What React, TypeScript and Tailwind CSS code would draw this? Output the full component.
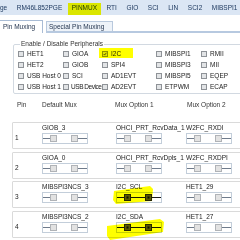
import React from "react";

const peripherals: string[][] = [
  ["HET1", "GIOA", "I2C", "MIBSPI1", "RMII"],
  ["HET2", "GIOB", "SPI4", "MIBSPI3", "MII"],
  ["USB Host 0", "SCI", "AD1EVT", "MIBSPI5", "EQEP"],
  ["USB Host 1", "USB Device", "AD2EVT", "ETPWM", "ECAP"],
];

const pins: { n: string; opts: string[]; sel: number }[] = [
  { n: "1", opts: ["GIOB_3", "OHCI_PRT_RcvData_1", "W2FC_RXDI"], sel: -1 },
  { n: "2", opts: ["GIOA_0", "OHCI_PRT_RcvDpls_1", "W2FC_RXDPI"], sel: -1 },
  { n: "3", opts: ["MIBSPI3NCS_3", "I2C_SCL", "HET1_29"], sel: 1 },
  { n: "4", opts: ["MIBSPI3NCS_2", "I2C_SDA", "HET1_27"], sel: 1 },
];

function Switch({ on }: { on: boolean }) {
  return (
    <svg width="46" height="11" viewBox="0 0 46 11" className="mt-[1px] block">
      <rect x="0.5" y="0.5" width="45" height="10" fill="none" stroke="#c3ceda" />
      {on ? (
        <line x1="1" y1="5.5" x2="45" y2="5.5" stroke="#1a1a1a" strokeWidth="1" />
      ) : (
        <>
          <line x1="1" y1="5.5" x2="8.5" y2="5.5" stroke="#6f7b8b" strokeWidth="1" />
          <line x1="35.5" y1="5.5" x2="45" y2="5.5" stroke="#6f7b8b" strokeWidth="1" />
        </>
      )}
      <rect x="8.5" y="2.5" width="6" height="6" fill={on ? "#5a5a5a" : "#e2e2e2"} stroke={on ? "#262626" : "#b0b3b7"} />
      <rect x="29.5" y="2.5" width="6" height="6" fill={on ? "#5a5a5a" : "#e2e2e2"} stroke={on ? "#262626" : "#b0b3b7"} />
      {on && (
        <>
          <rect x="10.5" y="4.5" width="2" height="2" fill="#111" />
          <rect x="31.5" y="4.5" width="2" height="2" fill="#111" />
        </>
      )}
    </svg>
  );
}

function Checkbox({ checked }: { checked?: boolean }) {
  return (
    <span className="shrink-0 w-[6px] h-[6px] border border-[#8e9297] bg-[#e2e4e6] flex items-center justify-center">
      {checked && (
        <svg width="6" height="6" viewBox="0 0 6 6" className="block">
          <path d="M1 3 L2.4 4.6 L5 1.2" fill="none" stroke="#222" strokeWidth="1" />
        </svg>
      )}
    </span>
  );
}

export default function App() {
  return (
    <div className="relative w-[240px] h-[240px] overflow-hidden bg-white font-['Liberation_Sans',Arial,sans-serif] text-[6.5px] leading-[8px] text-[#222]">
      {/* top tab bar */}
      <div className="h-[15px] bg-[#dbe6f4] flex items-center gap-[9.5px] whitespace-nowrap text-[#1f3a60] pt-[1px]">
        {["ge", "RM46L852PGE", "PINMUX", "RTI", "GIO", "SCI", "LIN", "SCI2", "MIBSPI1"].map((t) => (
          <span key={t}>{t}</span>
        ))}
      </div>

      {/* sub tabs */}
      <div className="h-[18px] flex items-end whitespace-nowrap text-[#1e2f4a]">
        <div className="w-[43px] h-[13px] pl-[3px] border-t border-r border-[#a9bcd5] bg-white flex items-center">
          Pin Muxing
        </div>
        <div className="ml-[3px] w-[67px] h-[12px] pl-[2px] border-t border-l border-r border-[#b9c9dd] border-b-2 border-b-[#b7c9e0] bg-[#eef3f9] flex items-center">
          Special Pin Muxing
        </div>
        <div className="flex-1 border-b-2 border-[#b7c9e0]" />
      </div>

      {/* peripherals group */}
      <fieldset className="mt-[7px] ml-[13px] w-[240px] border border-[#d2d9e1] rounded-[2px] pb-[1px]">
        <legend className="ml-[6px] px-[1px] leading-[8px] text-[#333]">Enable / Disable Peripherals</legend>
        <div className="grid grid-cols-[45px_39px_54px_45px_60px] auto-rows-[11px] pl-[4px]">
          {peripherals.flatMap((row, r) =>
            row.map((p, c) =>
              p === "USB Device" ? (
                <div key={`${r}-${c}`} className="flex items-center gap-[2px] whitespace-nowrap">
                  <Checkbox />
                  <span className="tracking-[-0.45px]">{p}</span>
                </div>
              ) : (
                <div key={`${r}-${c}`} className="flex items-center gap-[3px] whitespace-nowrap">
                  <Checkbox checked={p === "I2C"} />
                  <span>{p}</span>
                </div>
              )
            )
          )}
        </div>
      </fieldset>

      {/* header */}
      <div className="mt-[7px] ml-[17px] grid grid-cols-[25px_73px_72px_auto] whitespace-nowrap text-[#333]">
        <span>Pin</span>
        <span>Default Mux</span>
        <span>Mux Option 1</span>
        <span>Mux Option 2</span>
      </div>

      {/* pin rows */}
      <div className="mt-[13px] flex flex-col gap-[2.5px]">
        {pins.map((p) => (
          <div
            key={p.n}
            className="ml-[12px] w-[240px] h-[27px] border border-[#dadada] rounded-[1px] grid grid-cols-[27px_74px_70px_auto] pl-[2px]"
          >
            <div className="pt-[11px]">{p.n}</div>
            {p.opts.map((o, i) => (
              <div key={o} className="flex flex-col">
                <span className="mt-[1px] whitespace-nowrap">{o}</span>
                <Switch on={p.sel === i} />
              </div>
            ))}
          </div>
        ))}
      </div>

      {/* highlighter marks */}
      <div className="pointer-events-none absolute left-[68px] top-[3px] w-[33px] h-[12px] bg-[#ffff00] mix-blend-multiply" />
      <div className="pointer-events-none absolute left-[99px] top-[48px] w-[34px] h-[10px] bg-[#ffff00] mix-blend-multiply" />
      <svg className="pointer-events-none absolute left-0 top-0 mix-blend-multiply" width="240" height="240" viewBox="0 0 240 240">
        <polygon points="114,191 150,186 153,189 152,201 116,204 113,200" fill="#ffff00" />
        <polygon points="107,226 160,219 164,222 163,232 110,240 107,236" fill="#ffff00" />
      </svg>
    </div>
  );
}
